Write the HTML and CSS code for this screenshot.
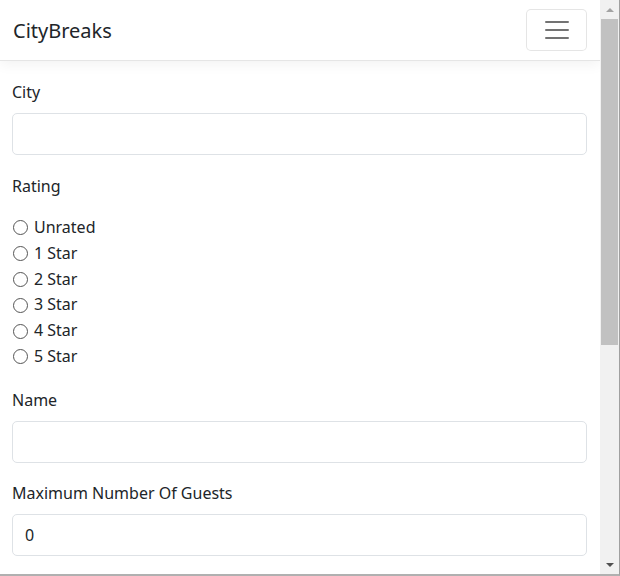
FILE: index.html
```html
<!DOCTYPE html>
<html lang="en">
<head>
  <meta charset="UTF-8">
  <title>CityBreaks</title>
  <link rel="stylesheet" href="styles.css">
</head>
<body>

<div class="window">
  <div class="viewport">
    <header class="navbar">
      <a class="brand" href="#">CityBreaks</a>
      <button class="toggler" type="button" aria-label="Toggle navigation">
        <svg width="30" height="30" viewBox="0 0 30 30">
          <path d="M4 7h22M4 15h22M4 23h22" stroke="rgba(0,0,0,0.55)" stroke-width="2" stroke-linecap="round"/>
        </svg>
      </button>
    </header>

    <main class="container">
      <form>
        <div class="group">
          <label for="city">City</label>
          <input class="field" id="city" type="text">
        </div>

        <div class="group tight">
          <label>Rating</label>
          <div class="radios">
            <label class="radio"><input type="radio" name="rating"> Unrated</label>
            <label class="radio"><input type="radio" name="rating"> 1 Star</label>
            <label class="radio"><input type="radio" name="rating"> 2 Star</label>
            <label class="radio"><input type="radio" name="rating"> 3 Star</label>
            <label class="radio"><input type="radio" name="rating"> 4 Star</label>
            <label class="radio"><input type="radio" name="rating"> 5 Star</label>
          </div>
        </div>

        <div class="group tight">
          <label for="name">Name</label>
          <input class="field" id="name" type="text">
        </div>

        <div class="group">
          <label for="guests">Maximum Number Of Guests</label>
          <input class="field" id="guests" type="text" value="0">
        </div>
      </form>
    </main>
  </div>

  <!-- fake browser scrollbar -->
  <div class="scrollbar">
    <span class="arrow up"></span>
    <div class="track"><div class="thumb"></div></div>
    <span class="arrow down"></span>
  </div>
</div>

</body>
</html>
```

FILE: styles.css
```css
body {
  margin: 0;
  background: white;
  color: #212529;
  font-family: 'Noto Sans', 'Open Sans', sans-serif;
  font-size: 16px;
  overflow: hidden;
}

.window {
  display: flex;
  width: 620px;
  height: 576px;
  box-sizing: border-box;
  border-right: 1px solid #a0a0a0;
  border-bottom: 2px solid #b0b0b0;
  overflow: hidden;
}

.viewport {
  flex: 1;
  overflow: hidden;
}

.navbar {
  display: flex;
  align-items: center;
  justify-content: space-between;
  height: 61px;
  padding: 0 13px 0 13px;
  border-bottom: 1px solid #e5e5e5;
  box-shadow: 0 4px 12px rgba(0, 0, 0, 0.05);
  box-sizing: border-box;
}

.brand {
  font-size: 20px;
  color: #212529;
  text-decoration: none;
  margin-top: 1px;
}

.toggler {
  display: flex;
  align-items: center;
  justify-content: center;
  width: 61px;
  height: 42px;
  padding: 0;
  background: white;
  border: 1px solid rgba(0, 0, 0, 0.1);
  border-radius: 5px;
  margin-top: -1px;
}

.container {
  padding: 18px 13px 0 12px;
}

.group {
  margin-bottom: 18px;
}

.group.tight {
  margin-bottom: 17px;
}

.group > label {
  display: block;
  line-height: 26px;
  margin-bottom: 8px;
}

.field {
  display: block;
  width: 100%;
  height: 42px;
  box-sizing: border-box;
  padding: 0 12px;
  font-family: inherit;
  font-size: 16px;
  color: #212529;
  border: 1px solid #dee2e6;
  border-radius: 5px;
  outline: none;
}

.radios {
  padding-top: 8px;
}

.radio {
  display: flex;
  align-items: center;
  gap: 6px;
  line-height: 25.8px;
}

.radio input {
  appearance: none;
  width: 15px;
  height: 15px;
  margin: 0 0 0 1px;
  border: 1px solid #555;
  border-radius: 50%;
  background: white;
}

.scrollbar {
  display: flex;
  flex-direction: column;
  width: 19px;
  background: #f1f1f1;
}

.arrow {
  display: flex;
  justify-content: center;
  align-items: center;
  height: 19px;
}

.arrow.up::before {
  content: '';
  border-left: 4px solid transparent;
  border-right: 4px solid transparent;
  border-bottom: 4px solid #a3a3a3;
}

.arrow.down::before {
  content: '';
  border-left: 4px solid transparent;
  border-right: 4px solid transparent;
  border-top: 4px solid #505050;
}

.track {
  flex: 1;
  padding: 0 1px;
}

.thumb {
  height: 326px;
  background: #c1c1c1;
}
```
